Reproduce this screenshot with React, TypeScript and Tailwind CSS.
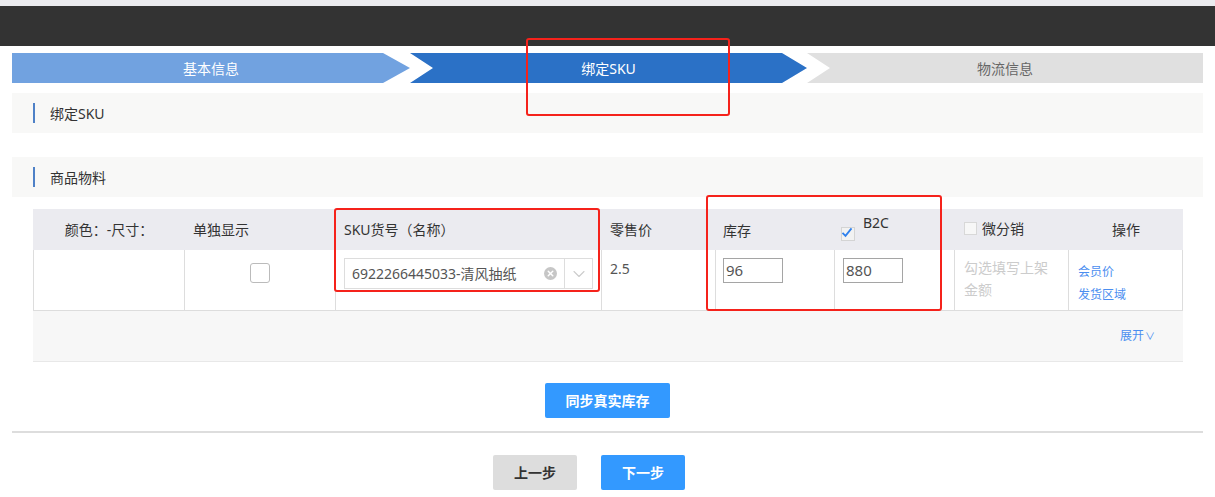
import { ChevronDown, X } from 'lucide-react'

const cols = ['w-[152px]', 'w-[151px]', 'w-[266px]', 'w-[114px]', 'w-[119px]', 'w-[120px]', 'w-[114px]', 'w-[114px]']

function SectionTitle({ title, className = '' }: { title: string; className?: string }) {
  return (
    <div className={`flex h-[40px] items-center bg-[#f8f8f7] pl-[21px] ${className}`}>
      <span className="h-[20px] w-[2px] bg-[#4f81c7]" />
      <span className="ml-[15px] text-[14px] text-[#333]">{title}</span>
    </div>
  )
}

function Steps() {
  return (
    <div className="flex h-[30px] text-[14px]">
      <div
        className="flex w-[398px] items-center justify-center bg-[#71a2e0] text-white"
        style={{ clipPath: 'polygon(0 0, 371px 0, 100% 50%, 371px 100%, 0 100%)' }}
      >
        基本信息
      </div>
      <div
        className="flex w-[397px] items-center justify-center bg-[#2b71c6] text-white"
        style={{ clipPath: 'polygon(0 0, 372px 0, 100% 50%, 372px 100%, 0 100%, 23px 50%)' }}
      >
        绑定SKU
      </div>
      <div
        className="flex flex-1 items-center justify-center bg-[#e0e0e0] text-[#666]"
        style={{ clipPath: 'polygon(0 0, 100% 0, 100% 100%, 0 100%, 23px 50%)' }}
      >
        物流信息
      </div>
    </div>
  )
}

function Table() {
  return (
    <div className="ml-[33px] mt-[12px] w-[1150px] text-[14px] text-[#333]">
      <div className="flex h-[41px] bg-[#ebebf0]">
        <div className={`${cols[0]} flex items-center justify-center`}>颜色：-尺寸：</div>
        <div className={`${cols[1]} flex items-center pl-[8px]`}>单独显示</div>
        <div className={`${cols[2]} flex items-center pl-[8px]`}>SKU货号（名称）</div>
        <div className={`${cols[3]} flex items-center pl-[8px]`}>零售价</div>
        <div className={`${cols[4]} flex items-center pl-[7px] pt-[2px]`}>库存</div>
        <div className={`${cols[5]} relative pl-[6px]`}>
          <span className="absolute left-[28px] top-[3px]">B2C</span>
          <span className="absolute left-[6px] top-[18px] flex h-[14px] w-[14px] items-center justify-center border border-[#d4d4d4] bg-[#f2f2f2]">
            <svg viewBox="0 0 16 16" className="h-[15px] w-[15px] -translate-x-[1px] -translate-y-[2px]">
              <path d="M2 8.5 L6 12.5 L14 2.5" fill="none" stroke="#2f80ed" strokeWidth="2.4" />
            </svg>
          </span>
        </div>
        <div className={`${cols[6]} flex items-center gap-[5px] pb-[2px] pl-[9px]`}>
          <span className="h-[13px] w-[13px] border border-[#d8d8d8] bg-[#f7f7f7]" />
          <span>微分销</span>
        </div>
        <div className={`${cols[7]} flex items-center justify-center`}>操作</div>
      </div>
      <div className="flex h-[61px] border-b border-[#ddd]">
        <div className={`${cols[0]} border-x border-[#ddd]`} />
        <div className={`${cols[1]} flex justify-center border-r border-[#ddd] pt-[13px]`}>
          <span className="h-[20px] w-[20px] rounded-[3px] border border-[#bbb] bg-white" />
        </div>
        <div className={`${cols[2]} border-r border-[#ddd] pl-[8px] pt-[8px]`}>
          <div className="flex h-[31px] w-[249px] items-center border border-[#ddd] bg-white">
            <span className="flex-1 pl-[7px] text-[14px] text-[#555]">6922266445033-清风抽纸</span>
            <span className="mr-[7px] flex h-[13px] w-[13px] items-center justify-center rounded-full bg-[#c6c6c6]">
              <X size={9} color="#fff" strokeWidth={4} />
            </span>
            <span className="flex h-full w-[28px] items-center justify-center border-l border-[#ddd]">
              <ChevronDown size={20} color="#cccccc" strokeWidth={1.3} />
            </span>
          </div>
        </div>
        <div className={`${cols[3]} border-r border-[#ddd] pl-[8px] pt-[8px] text-[#555]`}>2.5</div>
        <div className={`${cols[4]} border-r border-[#ddd] pl-[7px] pt-[8px]`}>
          <div className="flex h-[25px] w-[60px] items-center border border-[#a5a5a5] pl-[2px] text-[15px] text-[#555]">96</div>
        </div>
        <div className={`${cols[5]} border-r border-[#ddd] pl-[8px] pt-[8px]`}>
          <div className="flex h-[25px] w-[60px] items-center border border-[#a5a5a5] pl-[2px] text-[15px] text-[#555]">880</div>
        </div>
        <div className={`${cols[6]} border-r border-[#ddd] pl-[9px] pr-[14px] pt-[7px] leading-[22px] text-[#ccc]`}>
          勾选填写上架金额
        </div>
        <div className={`${cols[7]} border-r border-[#ddd] pl-[9px] pt-[10px] text-[12px] leading-[23px] text-[#4b8ef0]`}>
          <div>会员价</div>
          <div>发货区域</div>
        </div>
      </div>
      <div className="flex h-[51px] items-center justify-end border-b border-[#e8e8e8] bg-[#f7f7f7] pr-[28px] text-[12px] text-[#4b8ef0]">
        展开<span className="ml-[1px] text-[10px]">∨</span>
      </div>
    </div>
  )
}

export default function App() {
  return (
    <div className="relative min-h-screen bg-white font-['Noto_Sans','Noto_Sans_CJK_SC',sans-serif]">
      <div className="h-[6px] bg-[#ebebef]" />
      <div className="h-[40px] bg-[#333]" />
      <div className="px-[12px] pt-[7px]">
        <Steps />
        <SectionTitle title="绑定SKU" className="mt-[10px]" />
        <SectionTitle title="商品物料" className="mt-[24px]" />
      </div>
      <Table />
      <div className="mt-[21px] flex justify-center">
        <button className="h-[35px] w-[125px] rounded-[2px] bg-[#3399ff] text-[14px] font-bold text-white">
          同步真实库存
        </button>
      </div>
      <div className="mx-[12px] mt-[13px] h-[2px] bg-[#ddd]" />
      <div className="mt-[22px] flex justify-center gap-[24px] pr-[37px]">
        <button className="h-[35px] w-[84px] rounded-[2px] bg-[#dddddd] text-[14px] font-bold text-[#333]">上一步</button>
        <button className="h-[35px] w-[84px] rounded-[2px] bg-[#3399ff] text-[14px] font-bold text-white">下一步</button>
      </div>

      {/* annotation boxes drawn over the screenshot */}
      <div className="pointer-events-none absolute left-[526px] top-[38px] h-[78px] w-[204px] rounded-[3px] border-2 border-[#f5221b]" />
      <div className="pointer-events-none absolute left-[334px] top-[208px] h-[84px] w-[266px] rounded-[3px] border-2 border-[#f5221b]" />
      <div className="pointer-events-none absolute left-[706px] top-[195px] h-[116px] w-[236px] rounded-[3px] border-2 border-[#f5221b]" />
    </div>
  )
}
